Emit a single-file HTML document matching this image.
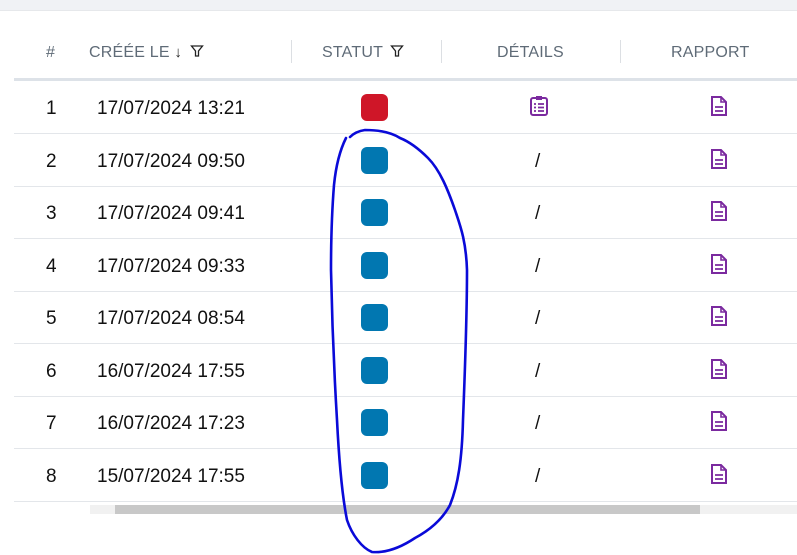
<!DOCTYPE html>
<html><head><meta charset="utf-8"><style>
body{margin:0;width:797px;height:555px;background:#fff;font-family:"Liberation Sans",sans-serif;position:relative;overflow:hidden}
.top{position:absolute;left:0;top:0;width:797px;height:10px;background:#f0f2f5;border-bottom:1px solid #e6e8eb}
.h{position:absolute;top:44px;font-size:16px;color:#5f6b77;letter-spacing:0.2px}
.div{position:absolute;top:40px;width:1px;height:23px;background:#dcdfe3}
.hb{position:absolute;left:14px;top:78px;width:783px;height:3px;background:#dde2e8}
.row{position:absolute;left:14px;width:783px;height:52px;border-bottom:1px solid #e3e6ea}
.c{position:absolute;font-size:19px;color:#111;top:17px}
.st{position:absolute;left:347px;top:13px;width:27px;height:27px;border-radius:6px;background:#0177b1}
.ic{position:absolute;top:14px}
</style></head><body>
<div class="top"></div>
<div class="h" style="left:46px">#</div>
<div class="h" style="left:89px">CRÉÉE LE <span style="font-size:15px;color:#222">&#8595;</span>
<svg width="14" height="14" viewBox="0 0 14 14" style="vertical-align:-1px;margin-left:3px"><path d="M1.5 2h11l-4 5v5h-3V7z" fill="none" stroke="#222" stroke-width="1.3"/></svg></div>
<div class="div" style="left:291px"></div>
<div class="h" style="left:322px">STATUT <svg width="14" height="14" viewBox="0 0 14 14" style="vertical-align:-1px;margin-left:3px"><path d="M1.5 2h11l-4 5v5h-3V7z" fill="none" stroke="#222" stroke-width="1.3"/></svg></div>
<div class="div" style="left:441px"></div>
<div class="h" style="left:497px">DÉTAILS</div>
<div class="div" style="left:620px"></div>
<div class="h" style="left:671px">RAPPORT</div>
<div class="hb"></div>

<div class="row" style="top:81px"><span class="c" style="left:32px">1</span><span class="c" style="left:83px">17/07/2024 13:21</span><div class="st" style="background:#cf1628"></div>
<svg class="ic" style="left:515px" width="20" height="22" viewBox="0 0 20 22"><rect x="2" y="3" width="16" height="17" rx="2" fill="none" stroke="#7b2a9f" stroke-width="2"/><rect x="7" y="1" width="6" height="4" fill="#7b2a9f"/><path d="M5 9h2M9 9h6M5 12.5h2M9 12.5h6M5 16h2M9 16h6" stroke="#7b2a9f" stroke-width="1.8"/></svg>
<svg class="ic" style="left:696px" width="18" height="22" viewBox="0 0 18 22"><path d="M2 2h9l5 5v13H2z" fill="none" stroke="#7b2a9f" stroke-width="2"/><path d="M11 2v5h5" fill="none" stroke="#7b2a9f" stroke-width="1.6"/><path d="M5 12h8M5 16h8" stroke="#7b2a9f" stroke-width="1.8"/></svg></div>

<div class="row" style="top:134px"><span class="c" style="left:32px">2</span><span class="c" style="left:83px">17/07/2024 09:50</span><div class="st"></div><span class="c" style="left:521px">/</span>
<svg class="ic" style="left:696px" width="18" height="22" viewBox="0 0 18 22"><path d="M2 2h9l5 5v13H2z" fill="none" stroke="#7b2a9f" stroke-width="2"/><path d="M11 2v5h5" fill="none" stroke="#7b2a9f" stroke-width="1.6"/><path d="M5 12h8M5 16h8" stroke="#7b2a9f" stroke-width="1.8"/></svg></div>
<div class="row" style="top:186px"><span class="c" style="left:32px">3</span><span class="c" style="left:83px">17/07/2024 09:41</span><div class="st"></div><span class="c" style="left:521px">/</span>
<svg class="ic" style="left:696px" width="18" height="22" viewBox="0 0 18 22"><path d="M2 2h9l5 5v13H2z" fill="none" stroke="#7b2a9f" stroke-width="2"/><path d="M11 2v5h5" fill="none" stroke="#7b2a9f" stroke-width="1.6"/><path d="M5 12h8M5 16h8" stroke="#7b2a9f" stroke-width="1.8"/></svg></div>
<div class="row" style="top:239px"><span class="c" style="left:32px">4</span><span class="c" style="left:83px">17/07/2024 09:33</span><div class="st"></div><span class="c" style="left:521px">/</span>
<svg class="ic" style="left:696px" width="18" height="22" viewBox="0 0 18 22"><path d="M2 2h9l5 5v13H2z" fill="none" stroke="#7b2a9f" stroke-width="2"/><path d="M11 2v5h5" fill="none" stroke="#7b2a9f" stroke-width="1.6"/><path d="M5 12h8M5 16h8" stroke="#7b2a9f" stroke-width="1.8"/></svg></div>
<div class="row" style="top:291px"><span class="c" style="left:32px">5</span><span class="c" style="left:83px">17/07/2024 08:54</span><div class="st"></div><span class="c" style="left:521px">/</span>
<svg class="ic" style="left:696px" width="18" height="22" viewBox="0 0 18 22"><path d="M2 2h9l5 5v13H2z" fill="none" stroke="#7b2a9f" stroke-width="2"/><path d="M11 2v5h5" fill="none" stroke="#7b2a9f" stroke-width="1.6"/><path d="M5 12h8M5 16h8" stroke="#7b2a9f" stroke-width="1.8"/></svg></div>
<div class="row" style="top:344px"><span class="c" style="left:32px">6</span><span class="c" style="left:83px">16/07/2024 17:55</span><div class="st"></div><span class="c" style="left:521px">/</span>
<svg class="ic" style="left:696px" width="18" height="22" viewBox="0 0 18 22"><path d="M2 2h9l5 5v13H2z" fill="none" stroke="#7b2a9f" stroke-width="2"/><path d="M11 2v5h5" fill="none" stroke="#7b2a9f" stroke-width="1.6"/><path d="M5 12h8M5 16h8" stroke="#7b2a9f" stroke-width="1.8"/></svg></div>
<div class="row" style="top:396px"><span class="c" style="left:32px">7</span><span class="c" style="left:83px">16/07/2024 17:23</span><div class="st"></div><span class="c" style="left:521px">/</span>
<svg class="ic" style="left:696px" width="18" height="22" viewBox="0 0 18 22"><path d="M2 2h9l5 5v13H2z" fill="none" stroke="#7b2a9f" stroke-width="2"/><path d="M11 2v5h5" fill="none" stroke="#7b2a9f" stroke-width="1.6"/><path d="M5 12h8M5 16h8" stroke="#7b2a9f" stroke-width="1.8"/></svg></div>
<div class="row" style="top:449px"><span class="c" style="left:32px">8</span><span class="c" style="left:83px">15/07/2024 17:55</span><div class="st"></div><span class="c" style="left:521px">/</span>
<svg class="ic" style="left:696px" width="18" height="22" viewBox="0 0 18 22"><path d="M2 2h9l5 5v13H2z" fill="none" stroke="#7b2a9f" stroke-width="2"/><path d="M11 2v5h5" fill="none" stroke="#7b2a9f" stroke-width="1.6"/><path d="M5 12h8M5 16h8" stroke="#7b2a9f" stroke-width="1.8"/></svg></div>

<div style="position:absolute;left:90px;top:505px;width:707px;height:9px;background:#f1f1f1"></div>
<div style="position:absolute;left:115px;top:505px;width:585px;height:9px;background:#c8c8c8"></div>

<svg style="position:absolute;left:0;top:0" width="797" height="555">
<path d="M346 138 C340 150 336 165 334 185 C332 210 331 240 331 270 C332 320 334 370 337 420 C339 460 342 495 347 520 C352 535 362 548 372 552 C385 553 400 548 415 538 C430 530 442 520 450 505 C458 485 462 460 463 420 C465 370 467 320 467 270 C466 240 460 225 455 210 C448 190 440 170 428 158 C420 150 410 142 400 138 C392 133 380 130 365 130 C358 131 353 134 350 137" fill="none" stroke="#0a0ad8" stroke-width="2.6" stroke-linecap="round"/>
</svg>
</body></html>
